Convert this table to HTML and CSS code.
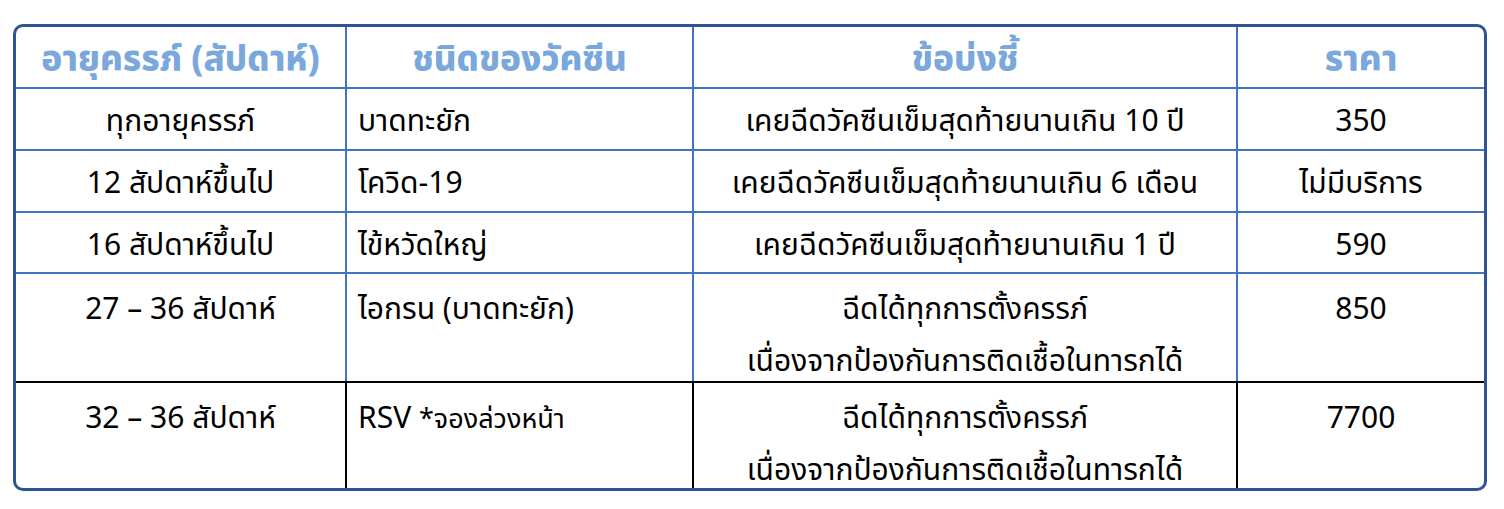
FILE: index.html
```html
<!DOCTYPE html>
<html lang="th">
<head>
<meta charset="utf-8">
<link rel="stylesheet" href="styles.css">
</head>
<body>
<div class="table">
  <div class="row head">
    <div class="cell c1">อายุครรภ์ (สัปดาห์)</div>
    <div class="cell c2">ชนิดของวัคซีน</div>
    <div class="cell c3">ข้อบ่งชี้</div>
    <div class="cell c4">ราคา</div>
  </div>
  <div class="row r1">
    <div class="cell c1">ทุกอายุครรภ์</div>
    <div class="cell c2">บาดทะยัก</div>
    <div class="cell c3">เคยฉีดวัคซีนเข็มสุดท้ายนานเกิน 10 ปี</div>
    <div class="cell c4">350</div>
  </div>
  <div class="row r2">
    <div class="cell c1">12 สัปดาห์ขึ้นไป</div>
    <div class="cell c2">โควิด-19</div>
    <div class="cell c3">เคยฉีดวัคซีนเข็มสุดท้ายนานเกิน 6 เดือน</div>
    <div class="cell c4">ไม่มีบริการ</div>
  </div>
  <div class="row r3">
    <div class="cell c1">16 สัปดาห์ขึ้นไป</div>
    <div class="cell c2">ไข้หวัดใหญ่</div>
    <div class="cell c3">เคยฉีดวัคซีนเข็มสุดท้ายนานเกิน 1 ปี</div>
    <div class="cell c4">590</div>
  </div>
  <div class="row r4 tall">
    <div class="cell c1">27 – 36 สัปดาห์</div>
    <div class="cell c2">ไอกรน (บาดทะยัก)</div>
    <div class="cell c3"><span class="line">ฉีดได้ทุกการตั้งครรภ์</span><span class="line">เนื่องจากป้องกันการติดเชื้อในทารกได้</span></div>
    <div class="cell c4">850</div>
  </div>
  <div class="row r5 tall">
    <div class="cell c1">32 – 36 สัปดาห์</div>
    <div class="cell c2">RSV <span class="small">*จองล่วงหน้า</span></div>
    <div class="cell c3"><span class="line">ฉีดได้ทุกการตั้งครรภ์</span><span class="line">เนื่องจากป้องกันการติดเชื้อในทารกได้</span></div>
    <div class="cell c4">7700</div>
  </div>
</div>
</body>
</html>
```
FILE: styles.css
```css
html, body {
  margin: 0;
  padding: 0;
  background: #ffffff;
}
body {
  padding: 24px 17px 0 13px;
  font-family: "Noto Sans Thai", "Noto Sans", "DejaVu Sans", sans-serif;
  color: #000;
}
.table {
  width: 1474px;
  box-sizing: border-box;
  border: 3px solid #2f5496;
  border-radius: 10px;
}
.row {
  display: grid;
  grid-template-columns: 331px 347px 544px 1fr;
  box-sizing: border-box;
  border-bottom: 2px solid #4472c4;
}
.cell {
  box-sizing: border-box;
  border-right: 2px solid #4472c4;
  font-size: 30px;
  line-height: 53px;
  padding-top: 7px;
  text-align: center;
  white-space: nowrap;
}
.cell.c4 { border-right: none; }
.cell.c2 { text-align: left; padding-left: 11px; }
.tall .cell {
  line-height: 34px;
  padding-top: 19px;
}
.line { display: block; }
.line + .line { margin-top: 18px; }
.head .cell {
  font-weight: 800;
  color: #7aa8dd;
  font-size: 35px;
  line-height: 60px;
  padding-top: 4px;
  text-align: center;
  padding-left: 0;
}
.head { height: 62px; }
.r1, .r2 { height: 62px; }
.r3 { height: 61px; }
.r4 { height: 109px; border-bottom-color: #000; }
.r5 { height: 105px; border-bottom: none; }
.r5 .cell { border-right-color: #000; }
.r5 .cell.c4 { border-right: none; }
.small { font-size: 27px; }
```
